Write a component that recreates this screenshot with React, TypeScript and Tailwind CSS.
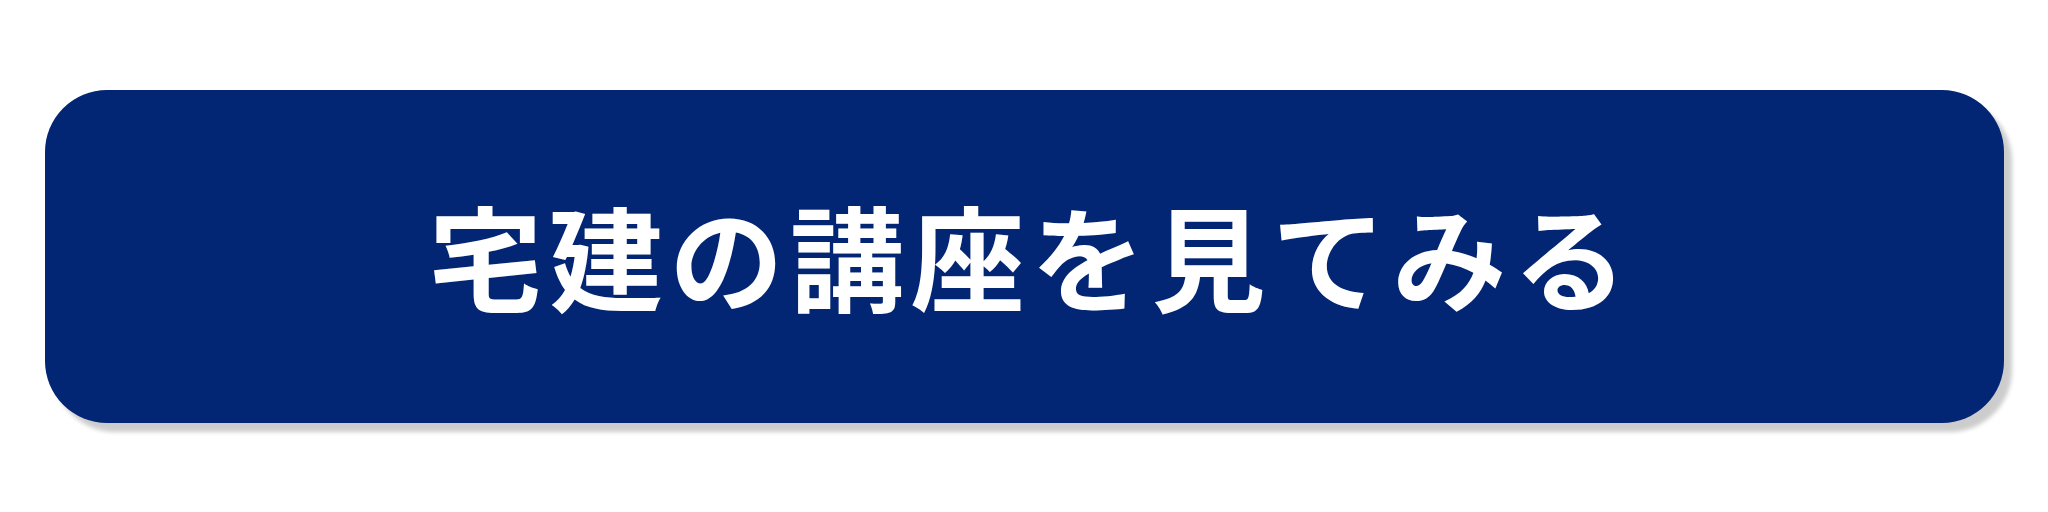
export default function App() {
  return (
    <div className="w-[2048px] h-[512px] bg-white pt-[90px] pl-[45px]">
      <a
        href="#"
        className="flex items-center justify-center w-[1959px] h-[333px] rounded-[62px] bg-[#022574] shadow-[8px_9px_4px_rgba(0,0,0,0.2)]"
      >
        <span
          className="text-white font-bold text-[114px] tracking-[6.5px] leading-none pl-[13px] pb-[6px]"
          style={{ fontFamily: '"Noto Sans CJK JP", sans-serif' }}
        >
          宅建の講座を見てみる
        </span>
      </a>
    </div>
  );
}
